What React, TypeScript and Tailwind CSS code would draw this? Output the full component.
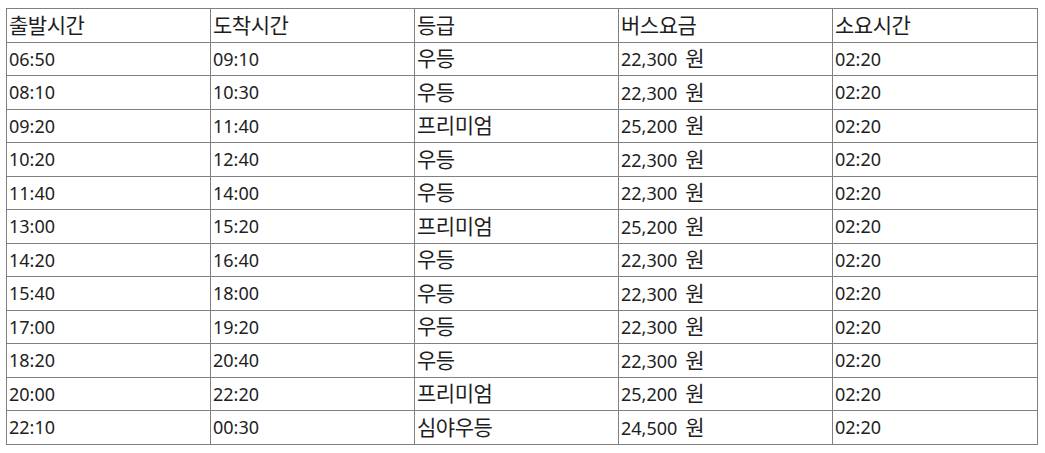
import React from "react";

const rows: [string, string, string, string, string][] = [
  ["06:50", "09:10", "우등", "22,300 원", "02:20"],
  ["08:10", "10:30", "우등", "22,300 원", "02:20"],
  ["09:20", "11:40", "프리미엄", "25,200 원", "02:20"],
  ["10:20", "12:40", "우등", "22,300 원", "02:20"],
  ["11:40", "14:00", "우등", "22,300 원", "02:20"],
  ["13:00", "15:20", "프리미엄", "25,200 원", "02:20"],
  ["14:20", "16:40", "우등", "22,300 원", "02:20"],
  ["15:40", "18:00", "우등", "22,300 원", "02:20"],
  ["17:00", "19:20", "우등", "22,300 원", "02:20"],
  ["18:20", "20:40", "우등", "22,300 원", "02:20"],
  ["20:00", "22:20", "프리미엄", "25,200 원", "02:20"],
  ["22:10", "00:30", "심야우등", "24,500 원", "02:20"],
];

const headers = ["출발시간", "도착시간", "등급", "버스요금", "소요시간"];

function Txt({ s }: { s: string }) {
  const parts = s.split(/(\s*[\uAC00-\uD7A3]+)/).filter((p) => p.length > 0);
  return (
    <>
      {parts.map((p, i) =>
        /[\uAC00-\uD7A3]/.test(p) ? (
          <span key={i} className="text-[21px] tracking-[-0.5px]">
            {p.startsWith(" ") ? (
              <>
                <span className="inline-block w-[8px]" />
                {p.trim()}
              </>
            ) : (
              p
            )}
          </span>
        ) : (
          <span key={i}>{p}</span>
        )
      )}
    </>
  );
}

export default function App() {
  return (
    <div
      className="bg-white w-[1045px] h-[453px] pt-[8px] pl-[6px] text-[#1e1e1e] text-[18px]"
      style={{ fontFamily: '"Noto Sans", "Noto Sans CJK KR", sans-serif' }}
    >
      <table className="border-collapse table-fixed w-[1031px]">
        <colgroup>
          <col className="w-[204px]" />
          <col className="w-[204px]" />
          <col className="w-[204px]" />
          <col className="w-[214px]" />
          <col className="w-[205px]" />
        </colgroup>
        <thead>
          <tr className="h-[33.5px]">
            {headers.map((h) => (
              <th
                key={h}
                className="border border-[#808080] text-left font-normal px-[2px] py-0 leading-none align-middle"
              >
                <Txt s={h} />
              </th>
            ))}
          </tr>
        </thead>
        <tbody>
          {rows.map((r, i) => (
            <tr key={i} className="h-[33.5px]">
              {r.map((c, j) => (
                <td
                  key={j}
                  className="border border-[#808080] px-[2px] py-0 leading-none align-middle"
                >
                  <Txt s={c} />
                </td>
              ))}
            </tr>
          ))}
        </tbody>
      </table>
    </div>
  );
}
